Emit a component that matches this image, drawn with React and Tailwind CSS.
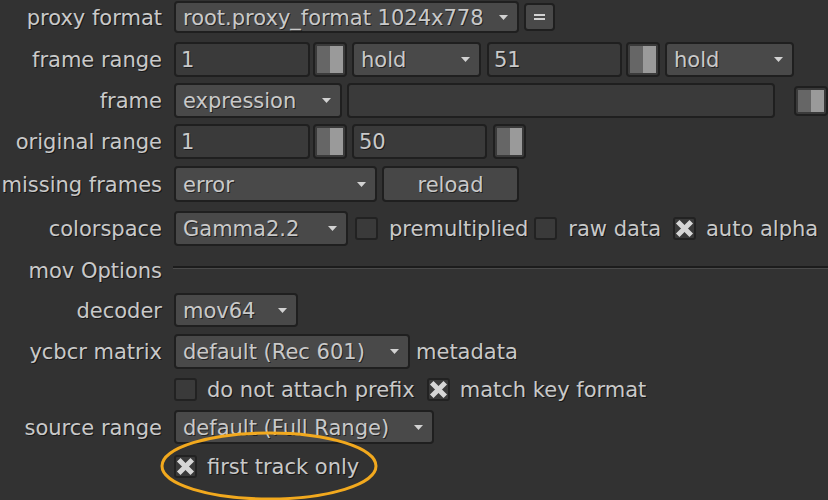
import React from "react";

const shadow = "[text-shadow:1px_1px_0_rgba(0,0,0,0.55)] pt-[3px]";

function Arrow() {
  return (
    <svg width="9" height="5" viewBox="0 0 9 5" className="shrink-0">
      <polygon points="0,0 9,0 4.5,5" fill="#d2d2d2" />
    </svg>
  );
}

function Dropdown({ className = "", children }) {
  return (
    <div
      className={`flex items-center justify-between h-full shrink-0 rounded-[4px] border-2 border-[#1f1f1f] bg-[#494949] pl-[7px] pr-[9px] ${className}`}
    >
      <span className={`whitespace-nowrap ${shadow}`}>{children}</span>
      <Arrow />
    </div>
  );
}

function Field({ className = "", children }) {
  return (
    <div
      className={`flex items-center h-full shrink-0 rounded-[4px] border-2 border-[#1f1f1f] bg-[#3a3a3a] pl-[5px] ${className}`}
    >
      <span className={`whitespace-nowrap ${shadow}`}>{children}</span>
    </div>
  );
}

function Toggle({ className = "" }) {
  return (
    <div
      className={`flex shrink-0 rounded-[4px] border-2 border-[#1f1f1f] bg-[#3a3a3a] p-[2px] ${className}`}
    >
      <div className="flex-1 bg-[#666666]" />
      <div className="flex-1 bg-[#9a9a9a]" />
    </div>
  );
}

function Check({ checked, className = "" }) {
  return (
    <div
      className={`w-[23px] h-[23px] shrink-0 rounded-[3px] border-2 border-[#222222] bg-[#3a3a3a] flex items-center justify-center ${className}`}
    >
      {checked && (
        <svg width="19" height="19" viewBox="0 0 19 19">
          <line x1="4.5" y1="4.5" x2="14.5" y2="14.5" stroke="#d6d6d6" strokeWidth="5" strokeLinecap="square" />
          <line x1="14.5" y1="4.5" x2="4.5" y2="14.5" stroke="#d6d6d6" strokeWidth="5" strokeLinecap="square" />
        </svg>
      )}
    </div>
  );
}

function Label({ children }) {
  return (
    <div className={`w-[162px] shrink-0 text-right whitespace-nowrap mr-[12px] ${shadow}`}>
      {children}
    </div>
  );
}

function Txt({ children, className = "" }) {
  return <span className={`whitespace-nowrap ${shadow} ${className}`}>{children}</span>;
}

export default function App() {
  return (
    <div className="relative w-[828px] h-[500px] overflow-hidden bg-[#323232] text-[#c9c9c9] text-[21px] font-['DejaVu_Sans',sans-serif] pt-[1px]">
      {/* proxy format */}
      <div className="flex items-center h-[32px]">
        <Label>proxy format</Label>
        <Dropdown className="w-[345px]">root.proxy_format 1024x778</Dropdown>
        <div className="ml-[5px] w-[31px] h-[28px] shrink-0 rounded-[4px] border-2 border-[#1f1f1f] bg-[#494949] flex items-center justify-center">
          <div className="flex flex-col gap-[2px]">
            <div className="w-[11px] h-[2px] bg-[#d2d2d2]" />
            <div className="w-[11px] h-[2px] bg-[#d2d2d2]" />
          </div>
        </div>
      </div>

      {/* frame range */}
      <div className="flex items-center h-[35px] mt-[9px]">
        <Label>frame range</Label>
        <Field className="w-[136px]">1</Field>
        <Toggle className="ml-[3px] w-[34px] h-full" />
        <Dropdown className="ml-[5px] w-[129px]">hold</Dropdown>
        <Field className="ml-[6px] w-[135px]">51</Field>
        <Toggle className="ml-[4px] w-[34px] h-full" />
        <Dropdown className="ml-[5px] w-[129px]">hold</Dropdown>
      </div>

      {/* frame */}
      <div className="flex items-center h-[35px] mt-[6px]">
        <Label>frame</Label>
        <Dropdown className="w-[168px]">expression</Dropdown>
        <Field className="ml-[5px] w-[428px]" />
        <Toggle className="ml-[19px] w-[34px] h-[30px]" />
      </div>

      {/* original range */}
      <div className="flex items-center h-[35px] mt-[6px]">
        <Label>original range</Label>
        <Field className="w-[136px]">1</Field>
        <Toggle className="ml-[3px] w-[34px] h-full" />
        <Field className="ml-[5px] w-[135px]">50</Field>
        <Toggle className="ml-[6px] w-[33px] h-full" />
      </div>

      {/* missing frames */}
      <div className="flex items-center h-[36px] mt-[7px]">
        <Label>missing frames</Label>
        <Dropdown className="w-[203px]">error</Dropdown>
        <div className="ml-[5px] w-[137px] h-full shrink-0 rounded-[4px] border-2 border-[#1f1f1f] bg-[#474747] flex items-center justify-center">
          <Txt>reload</Txt>
        </div>
      </div>

      {/* colorspace */}
      <div className="flex items-center h-[35px] mt-[9px]">
        <Label>colorspace</Label>
        <Dropdown className="w-[174px]">Gamma2.2</Dropdown>
        <Check className="ml-[7px]" />
        <Txt className="ml-[11px]">premultiplied</Txt>
        <Check className="ml-[6px]" />
        <Txt className="ml-[11px]">raw data</Txt>
        <Check className="ml-[12px]" checked />
        <Txt className="ml-[10px]">auto alpha</Txt>
      </div>

      {/* mov Options */}
      <div className="flex items-center h-[36px] mt-[6px]">
        <Label>mov Options</Label>
        <div className="flex-1 h-[3px] border-t-2 border-b border-t-[#1c1c1c] border-b-[#4a4a4a] mb-[6px] ml-[-1px]" />
      </div>

      {/* decoder */}
      <div className="flex items-center h-[34px] mt-[5px]">
        <Label>decoder</Label>
        <Dropdown className="w-[124px]">mov64</Dropdown>
      </div>

      {/* ycbcr matrix */}
      <div className="flex items-center h-[35px] mt-[7px]">
        <Label>ycbcr matrix</Label>
        <Dropdown className="w-[236px]">default (Rec 601)</Dropdown>
        <Txt className="ml-[6px]">metadata</Txt>
      </div>

      {/* prefix */}
      <div className="flex items-center h-[32px] mt-[4px]">
        <Label />
        <Check />
        <Txt className="ml-[10px]">do not attach prefix</Txt>
        <Check className="ml-[12px]" checked />
        <Txt className="ml-[10px]">match key format</Txt>
      </div>

      {/* source range */}
      <div className="flex items-center h-[34px] mt-[5px]">
        <Label>source range</Label>
        <Dropdown className="w-[260px]">default (Full Range)</Dropdown>
      </div>

      {/* first track only */}
      <div className="flex items-center h-[32px] mt-[6px]">
        <Label />
        <Check checked />
        <Txt className="ml-[10px]">first track only</Txt>
      </div>

      <svg
        className="absolute left-[160px] top-[430px] pointer-events-none"
        width="220"
        height="72"
        viewBox="0 0 220 72"
      >
        <ellipse cx="109" cy="36" rx="107" ry="33" fill="none" stroke="#f2a91e" strokeWidth="3" />
      </svg>
    </div>
  );
}
